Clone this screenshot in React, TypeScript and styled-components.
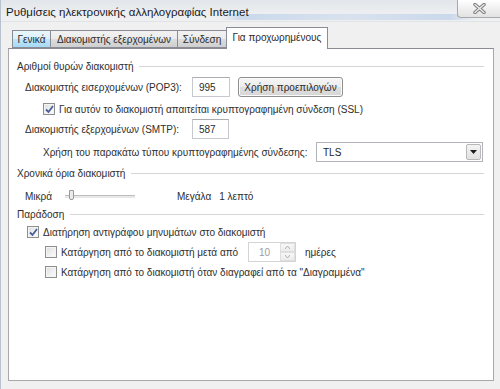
import React from "react";
import styled, { createGlobalStyle } from "styled-components";

const Global = createGlobalStyle`
  html, body { margin: 0; padding: 0; background: #f0f0f0; }
  body { font-family: "Liberation Sans", Arial, sans-serif; font-size: 10px; color: #2e2e2e; }
  * { box-sizing: border-box; }
`;

const Window = styled.div`
  width: 500px;
  height: 389px;
  display: flex;
  flex-direction: column;
  background: #f0f0f0;
  border-left: 1px solid #b9c3cf;
  overflow: hidden;
`;

const TitleBar = styled.div`
  height: 22px;
  display: flex;
  align-items: flex-start;
  justify-content: space-between;
  background:
    linear-gradient(90deg, rgba(255,255,255,0) 0%, rgba(255,255,255,0) 44%, rgba(120,165,225,0.3) 48%, rgba(150,185,230,0.25) 70%, rgba(120,165,225,0.3) 90%, rgba(255,255,255,0) 95%) 0 14px / 100% 6px no-repeat,
    linear-gradient(180deg, #e2e6ea 0%, #eceef1 60%, #f0f0f0 100%);
  border-bottom: 1px solid #e0e3e8;
`;

const Title = styled.div`
  padding: 6px 0 0 5px;
  font-size: 11.5px;
  color: #1b1b1b;
  white-space: nowrap;
`;

const CloseButton = styled.div`
  width: 43px;
  height: 18px;
  display: flex;
  align-items: center;
  justify-content: center;
  background: linear-gradient(180deg, #ffffff 0%, #f0f0f0 50%, #e2e2e2 100%);
  border: 1px solid #a6a9ad;
  border-top: none;
  border-right: none;
  border-bottom-left-radius: 4px;
`;

const Body = styled.div`
  flex: 1;
  display: flex;
  flex-direction: column;
  padding: 5px 6px 8px 7px;
`;

const TabStrip = styled.div`
  height: 21px;
  display: flex;
  align-items: flex-end;
  padding-left: 4px;
`;

const Tab = styled.div<{ $w: number; $active?: boolean; $hover?: boolean }>`
  width: ${(p) => p.$w}px;
  height: ${(p) => (p.$active ? 22 : 18)}px;
  margin-bottom: ${(p) => (p.$active ? -1 : 0)}px;
  margin-left: ${(p) => (p.$active ? -1 : 0)}px;
  position: relative;
  z-index: ${(p) => (p.$active ? 2 : 1)};
  display: flex;
  align-items: center;
  justify-content: center;
  white-space: nowrap;
  color: #2b2b2b;
  border: 1px solid #898c95;
  border-bottom: ${(p) => (p.$active ? "none" : "1px solid #898c95")};
  border-left: ${(p) => (p.$active ? "1px solid #898c95" : "none")};
  padding-bottom: ${(p) => (p.$active ? 2 : 0)}px;
  background: ${(p) =>
    p.$active
      ? "#ffffff"
      : p.$hover
      ? "linear-gradient(180deg, #eaf6fd 0%, #d9f0fc 50%, #bee6fd 51%, #a7d9f5 100%)"
      : "linear-gradient(180deg, #f2f2f2 0%, #ebebeb 50%, #dddddd 51%, #cfcfcf 100%)"};
  &:first-child { border-left: 1px solid #898c95; }
`;

const Panel = styled.div`
  height: 333px;
  background: #ffffff;
  border: 1px solid #898c95;
  border-color: #898c95 #a8a8a8 #a8a8a8 #a8a8a8;
  display: flex;
  flex-direction: column;
  padding: 9px 9px 0 8px;
`;

const GroupHeader = styled.div<{ $mt: number }>`
  height: 16px;
  margin-top: ${(p) => p.$mt}px;
  display: flex;
  align-items: center;
  gap: 6px;
  white-space: nowrap;
  &::after {
    content: "";
    flex: 1;
    border-top: 1px solid #d5d5d5;
  }
`;

const Row = styled.div<{ $indent: number; $mt: number; $h: number }>`
  height: ${(p) => p.$h}px;
  margin-top: ${(p) => p.$mt}px;
  padding-left: ${(p) => p.$indent}px;
  display: flex;
  align-items: center;
  white-space: nowrap;
`;

const FieldLabel = styled.span<{ $w: number }>`
  width: ${(p) => p.$w}px;
  flex-shrink: 0;
`;

const TextBox = styled.div<{ $w: number; $disabled?: boolean }>`
  width: ${(p) => p.$w}px;
  height: 20px;
  display: flex;
  align-items: center;
  padding-left: 6px;
  background: #ffffff;
  border: 1px solid #c5c8ce;
  border-top-color: #abadb3;
  color: ${(p) => (p.$disabled ? "#9a9a9a" : "#2b2b2b")};
`;

const Button = styled.div`
  width: 105px;
  height: 20px;
  margin-left: 8px;
  display: flex;
  align-items: center;
  justify-content: center;
  border: 1px solid #8f8f8f;
  border-radius: 3px;
  background: linear-gradient(180deg, #f6f6f6 0%, #ececec 50%, #dfdfdf 51%, #d6d6d6 100%);
  box-shadow: inset 0 0 0 1px #fbfbfb;
  color: #2b2b2b;
`;

const Select = styled.div`
  width: 167px;
  height: 20px;
  display: flex;
  align-items: center;
  justify-content: space-between;
  padding: 0 1px 0 6px;
  background: #ffffff;
  border: 1px solid #b0b3b9;
  color: #1e1e1e;
`;

const DropButton = styled.div`
  width: 15px;
  height: 16px;
  display: flex;
  align-items: center;
  justify-content: center;
  border: 1px solid #b8b8b8;
  border-radius: 2px;
  background: linear-gradient(180deg, #f4f4f4 0%, #e2e2e2 100%);
`;

const CheckBox = styled.span<{ $checked?: boolean }>`
  width: 12px;
  height: 12px;
  flex-shrink: 0;
  margin-right: 4px;
  display: flex;
  align-items: center;
  justify-content: center;
  border: 1px solid #8e8f8f;
  background: linear-gradient(135deg, #dcdcdc 0%, #f2f2f2 60%, #fbfbfb 100%);
  box-shadow: inset 0 0 0 1px #f4f4f4;
`;

const SliderTrack = styled.div`
  width: 70px;
  height: 3px;
  margin: 0 42px 0 0;
  position: relative;
  border-top: 1px solid #bdbdbd;
  border-bottom: 1px solid #e6e6e6;
  background: #e9e9e9;
`;

const SliderThumb = styled.div`
  position: absolute;
  left: 4px;
  top: -6px;
  width: 5px;
  height: 10px;
  border: 1px solid #9a9a9a;
  border-radius: 0 0 2px 2px;
  background: #ececec;
`;

const Gap = styled.span<{ $w: number }>`
  display: inline-block;
  width: ${(p) => p.$w}px;
  flex-shrink: 0;
`;

const Spinner = styled.div`
  width: 48px;
  height: 20px;
  display: flex;
  margin-right: 9px;
  border: 1px solid #d2d4d8;
  background: #ffffff;
`;

const SpinText = styled.div`
  flex: 1;
  display: flex;
  align-items: center;
  padding-left: 10px;
  color: #9c9c9c;
`;

const SpinButtons = styled.div`
  width: 15px;
  display: flex;
  flex-direction: column;
`;

const SpinButton = styled.div`
  flex: 1;
  display: flex;
  align-items: center;
  justify-content: center;
  border: 1px solid #dedede;
  background: linear-gradient(180deg, #f7f7f7, #ececec);
`;

const Check = () => (
  <svg width="9" height="9" viewBox="0 0 9 9">
    <path d="M1 4.5 L3.5 7 L8 1" fill="none" stroke="#4a5f97" strokeWidth="1.8" />
  </svg>
);

const Chk: React.FC<{ checked?: boolean }> = ({ checked }) => (
  <CheckBox $checked={checked}>{checked && <Check />}</CheckBox>
);

export default function App() {
  return (
    <>
      <Global />
      <Window>
        <TitleBar>
          <Title>Ρυθμίσεις ηλεκτρονικής αλληλογραφίας Internet</Title>
          <CloseButton>
            <svg width="13" height="11" viewBox="0 0 13 11">
              <path d="M2 1.5 L11 9.5 M11 1.5 L2 9.5" stroke="#7d7d7d" strokeWidth="3.4" strokeLinecap="round" />
              <path d="M2 1.5 L11 9.5 M11 1.5 L2 9.5" stroke="#eeeeee" strokeWidth="1.4" strokeLinecap="round" />
            </svg>
          </CloseButton>
        </TitleBar>
        <Body>
          <TabStrip>
            <Tab $w={39} $hover>Γενικά</Tab>
            <Tab $w={127}>Διακομιστής εξερχομένων</Tab>
            <Tab $w={49}>Σύνδεση</Tab>
            <Tab $w={102} $active>Για προχωρημένους</Tab>
          </TabStrip>
          <Panel>
            <GroupHeader $mt={0}>Αριθμοί θυρών διακομιστή</GroupHeader>
            <Row $indent={8} $mt={3} $h={20}>
              <FieldLabel $w={167}>Διακομιστής εισερχομένων (POP3):</FieldLabel>
              <TextBox $w={38}>995</TextBox>
              <Button>Χρήση προεπιλογών</Button>
            </Row>
            <Row $indent={26} $mt={3} $h={18}>
              <Chk checked />
              Για αυτόν το διακομιστή απαιτείται κρυπτογραφημένη σύνδεση (SSL)
            </Row>
            <Row $indent={8} $mt={1} $h={20}>
              <FieldLabel $w={167}>Διακομιστής εξερχομένων (SMTP):</FieldLabel>
              <TextBox $w={37}>587</TextBox>
            </Row>
            <Row $indent={26} $mt={3} $h={20}>
              <FieldLabel $w={273}>Χρήση του παρακάτω τύπου κρυπτογραφημένης σύνδεσης:</FieldLabel>
              <Select>
                TLS
                <DropButton>
                  <svg width="7" height="4" viewBox="0 0 7 4">
                    <path d="M0 0 H7 L3.5 4 Z" fill="#1e1e1e" />
                  </svg>
                </DropButton>
              </Select>
            </Row>
            <GroupHeader $mt={3}>Χρονικά όρια διακομιστή</GroupHeader>
            <Row $indent={8} $mt={6} $h={18}>
              <FieldLabel $w={40}>Μικρά</FieldLabel>
              <SliderTrack>
                <SliderThumb />
              </SliderTrack>
              Μεγάλα
              <Gap $w={8} />
              1 λεπτό
            </Row>
            <GroupHeader $mt={1}>Παράδοση</GroupHeader>
            <Row $indent={10} $mt={1} $h={18}>
              <Chk checked />
              Διατήρηση αντιγράφου μηνυμάτων στο διακομιστή
            </Row>
            <Row $indent={28} $mt={1} $h={20}>
              <Chk />
              <FieldLabel $w={187}>Κατάργηση από το διακομιστή μετά από</FieldLabel>
              <Spinner>
                <SpinText>10</SpinText>
                <SpinButtons>
                  <SpinButton>
                    <svg width="5" height="3" viewBox="0 0 5 3"><path d="M0 3 L2.5 0 L5 3" fill="none" stroke="#b0b0b0" /></svg>
                  </SpinButton>
                  <SpinButton>
                    <svg width="5" height="3" viewBox="0 0 5 3"><path d="M0 0 L2.5 3 L5 0" fill="none" stroke="#b0b0b0" /></svg>
                  </SpinButton>
                </SpinButtons>
              </Spinner>
              ημέρες
            </Row>
            <Row $indent={28} $mt={1} $h={18}>
              <Chk />
              Κατάργηση από το διακομιστή όταν διαγραφεί από τα "Διαγραμμένα"
            </Row>
          </Panel>
        </Body>
      </Window>
    </>
  );
}
